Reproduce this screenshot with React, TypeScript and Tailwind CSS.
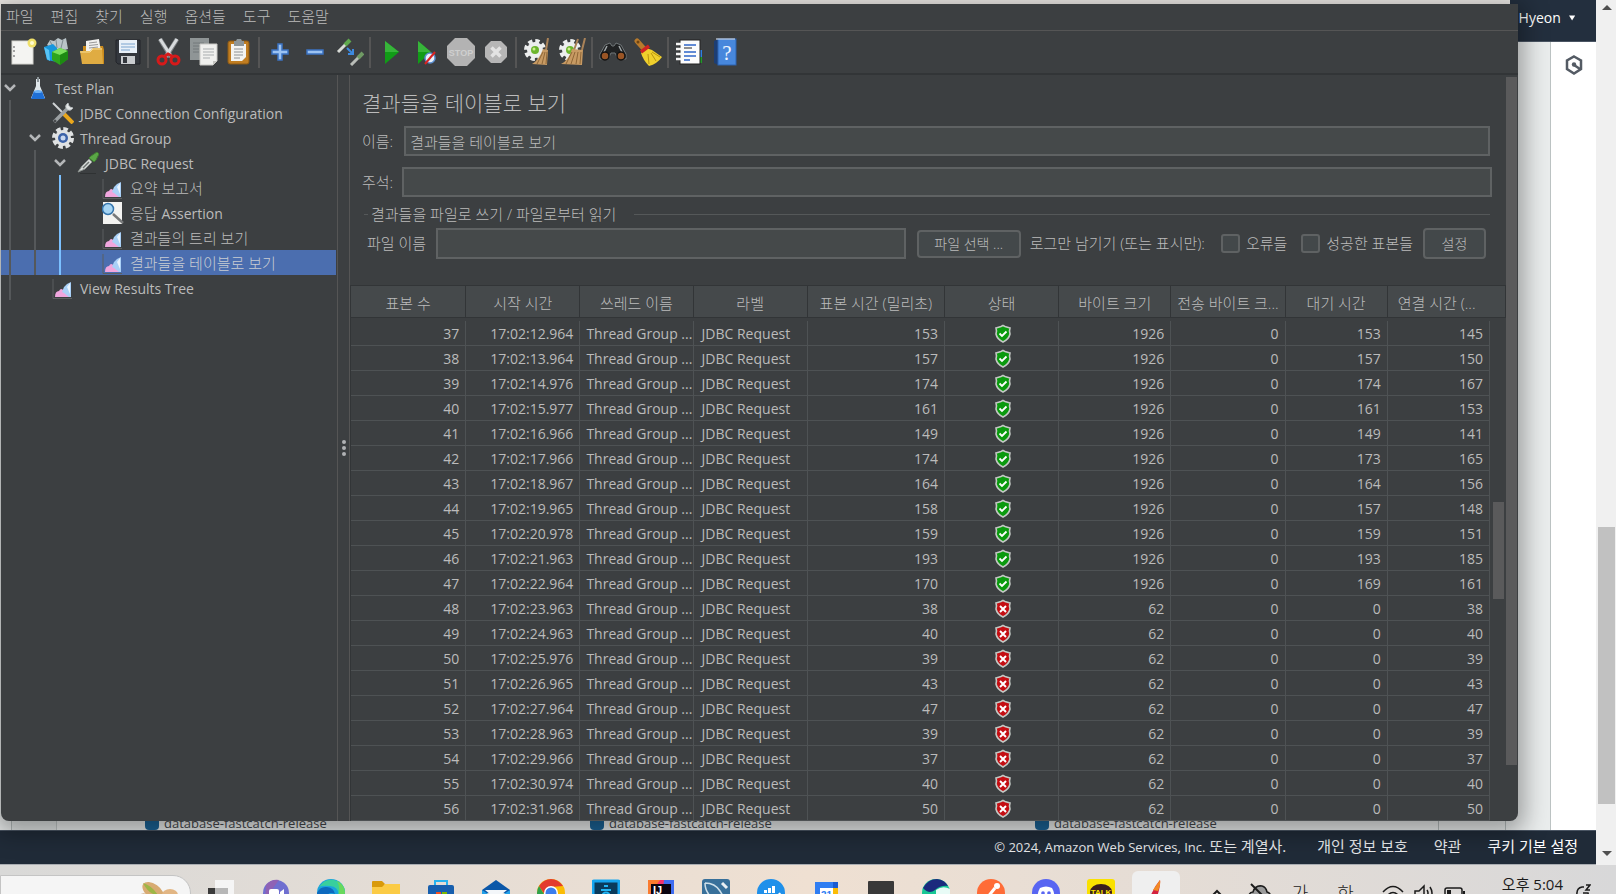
import type { ReactNode } from "react";

type Sample = [number, string, number, boolean, number, number, number];

// 표본 수, 시작 시간, 표본 시간, 성공 여부, 바이트, 대기 시간, 연결 시간
const samples: Sample[] = [
  [37, "17:02:12.964", 153, true, 1926, 153, 145],
  [38, "17:02:13.964", 157, true, 1926, 157, 150],
  [39, "17:02:14.976", 174, true, 1926, 174, 167],
  [40, "17:02:15.977", 161, true, 1926, 161, 153],
  [41, "17:02:16.966", 149, true, 1926, 149, 141],
  [42, "17:02:17.966", 174, true, 1926, 173, 165],
  [43, "17:02:18.967", 164, true, 1926, 164, 156],
  [44, "17:02:19.965", 158, true, 1926, 157, 148],
  [45, "17:02:20.978", 159, true, 1926, 159, 151],
  [46, "17:02:21.963", 193, true, 1926, 193, 185],
  [47, "17:02:22.964", 170, true, 1926, 169, 161],
  [48, "17:02:23.963", 38, false, 62, 0, 38],
  [49, "17:02:24.963", 40, false, 62, 0, 40],
  [50, "17:02:25.976", 39, false, 62, 0, 39],
  [51, "17:02:26.965", 43, false, 62, 0, 43],
  [52, "17:02:27.964", 47, false, 62, 0, 47],
  [53, "17:02:28.963", 39, false, 62, 0, 39],
  [54, "17:02:29.966", 37, false, 62, 0, 37],
  [55, "17:02:30.974", 40, false, 62, 0, 40],
  [56, "17:02:31.968", 50, false, 62, 0, 50],
];

const columns = [
  "표본 수",
  "시작 시간",
  "쓰레드 이름",
  "라벨",
  "표본 시간 (밀리초)",
  "상태",
  "바이트 크기",
  "전송 바이트 크...",
  "대기 시간",
];

const menus = ["파일", "편집", "찾기", "실행", "옵션들", "도구", "도움말"];

/* ---------- Iconos de la barra de herramientas ---------- */

const Svg = ({ children, size = 28, box = 28 }: { children: ReactNode; size?: number; box?: number }) => (
  <svg width={size} height={size} viewBox={`0 0 ${box} ${box}`} fill="none" aria-hidden="true" className="shrink-0">
    {children}
  </svg>
);

const NewIcon = () => (
  <Svg>
    <rect x="3" y="3" width="21" height="23" fill="#f4f4f2" stroke="#d5d5d0" />
    <path d="M5 8v2M5 12v2M5 17v2" stroke="#888" strokeWidth="1.5" />
    <circle cx="23" cy="5" r="4.5" fill="#efe06a" />
    <circle cx="23" cy="5" r="2" fill="#fffbd0" />
  </Svg>
);

const TemplatesIcon = () => (
  <Svg>
    <path d="M3 7l3-5 4 1 4-3 4 2 4-2 2 11-10 3z" fill="#b9c4c8" />
    <path d="M6 3l3 6M12 2l1 8M19 2l-2 8" stroke="#7d8a8f" />
    <path d="M0 9l9-3 4 4v14l-10-2z" fill="#1696dd" />
    <path d="M0 9l5 3 1 11-3-2z" fill="#58c3f5" />
    <path d="M8 14l8-4 8 3v8l-8 6-8-5z" fill="#2ea51c" />
    <path d="M8 14l8-4 8 3-8 4z" fill="#7be05c" />
    <path d="M16 17v10l8-6v-8z" fill="#1d8a12" />
  </Svg>
);

const OpenIcon = () => (
  <Svg>
    <path d="M4 8h20l1 4v14H4z" fill="#c98a1c" />
    <path d="M7 3l13-2 2 13H7z" fill="#f1f1ef" />
    <path d="M10 5l8-1M10 7.500l9-1M10 10l9-1" stroke="#999" />
    <path d="M1 13h10l3-3h9l1 16H3z" fill="#e0ac42" />
    <path d="M1 14h10l3-3h9" stroke="#f8dc91" />
  </Svg>
);

const SaveIcon = () => (
  <Svg>
    <path d="M2 2h24v24H4l-2-2z" fill="#33373d" stroke="#22252a" />
    <rect x="5" y="2" width="18" height="13" fill="#e8f0f8" />
    <path d="M7 6h14M7 9h14M7 12h9" stroke="#7ba4cf" />
    <rect x="7" y="18" width="14" height="8" fill="#c9cccf" />
    <rect x="9" y="19" width="4" height="6" fill="#33373d" />
  </Svg>
);

const CutIcon = () => (
  <Svg>
    <path d="M5 1l11 18M22 1L11 19" stroke="#7e8285" strokeWidth="4.500" />
    <path d="M5 1l11 17M22 1L11 18" stroke="#d9dcde" strokeWidth="3" />
    <ellipse cx="7" cy="22" rx="4" ry="4" stroke="#d61a1a" strokeWidth="3" />
    <ellipse cx="20" cy="22" rx="4" ry="4" stroke="#d61a1a" strokeWidth="3" />
    <path d="M10 18l3-2 4 2" stroke="#d61a1a" strokeWidth="3" />
  </Svg>
);

const CopyIcon = () => (
  <Svg>
    <rect x="0" y="0" width="19" height="22" fill="#8f9596" />
    <path d="M3 5h11M3 8h11M3 11h6M3 14h6" stroke="#73797a" />
    <path d="M10 6h17v17l-4 4H10z" fill="#f0f0ee" stroke="#c8c8c5" />
    <path d="M13 11h11M13 14h11M13 17h11M13 20h7" stroke="#a9adaf" />
    <path d="M27 23h-4v4z" fill="#c4c4c0" />
  </Svg>
);

const PasteIcon = () => (
  <Svg>
    <rect x="3" y="3" width="21" height="23" rx="2" fill="#c07d21" stroke="#8c5a14" />
    <path d="M6 6h15v13l-4 4H6z" fill="#f3f3f0" />
    <path d="M9 11h9M9 14h9M9 17h9M9 20h6" stroke="#8e9294" />
    <path d="M9 3h2l1-2h4l1 2h2v5H9z" fill="#8d9597" />
  </Svg>
);

const PlusIcon = () => (
  <Svg>
    <path d="M12 6h4v6h6v4h-6v6h-4v-6H6v-4h6z" fill="#9cc3f2" stroke="#3b73c2" strokeWidth="1.500" />
  </Svg>
);

const MinusIcon = () => (
  <Svg>
    <rect x="6" y="12" width="16" height="4" fill="#9cc3f2" stroke="#3b73c2" strokeWidth="1.500" />
  </Svg>
);

const ToggleIcon = () => (
  <Svg>
    <path d="M2 14l8-8" stroke="#d8dbd6" strokeWidth="3" />
    <path d="M9 7l5-5" stroke="#5fa84e" strokeWidth="4" />
    <path d="M11 10l5 5M17 11v5h-5" stroke="#3d8ae0" strokeWidth="2" />
    <path d="M15 27l8-8" stroke="#b9bdb8" strokeWidth="3" />
    <path d="M22 20l5-5" stroke="#6f9a64" strokeWidth="4" />
  </Svg>
);

const StartIcon = () => (
  <Svg>
    <path d="M8 3l14 11L8 26z" fill="#119c17" />
    <path d="M8 3l14 11H8z" fill="#37b53a" />
  </Svg>
);

const StartNoPauseIcon = () => (
  <Svg>
    <path d="M6 3l13 11L6 26z" fill="#119c17" />
    <path d="M6 3l13 11H6z" fill="#37b53a" />
    <circle cx="18" cy="20" r="5" fill="#e9f1fb" stroke="#5c8fd0" strokeWidth="1.500" />
    <path d="M13 26L23 14" stroke="#d92323" strokeWidth="2" />
  </Svg>
);

const StopIcon = () => (
  <Svg>
    <path d="M8 0h12l8 8v12l-8 8H8l-8-8V8z" fill="#b3b3b3" />
    <text x="14" y="18" textAnchor="middle" fontSize="9" fontWeight="700" fontFamily="Liberation Sans, sans-serif" fill="#cfcfcf">
      STOP
    </text>
  </Svg>
);

const ShutdownIcon = () => (
  <Svg>
    <path d="M9 3h10l6 6v10l-6 6H9l-6-6V9z" fill="#b6b6b6" />
    <path d="M9.500 9.500l9 9M18.500 9.500l-9 9" stroke="#e3e3e3" strokeWidth="3.500" />
  </Svg>
);

const Gear = () => (
  <>
    <circle cx="12" cy="12" r="8" fill="#eceeee" />
    <circle cx="12" cy="12" r="9" stroke="#eceeee" strokeWidth="4" strokeDasharray="4.200 2.870" />
    <circle cx="12" cy="12" r="4" fill="#6cb52d" />
    <circle cx="11" cy="11" r="1.500" fill="#cdf08f" />
  </>
);

const ClearIcon = () => (
  <Svg>
    <Gear />
    <path d="M25 0l-2 12" stroke="#a98258" strokeWidth="2" />
    <path d="M20 11l5 1-1 15-15-1q7-4 11-15z" fill="#c79a63" />
    <path d="M20 14l-6 12M22 14l-3 12M24 14l-1 12" stroke="#8f6737" />
  </Svg>
);

const ClearAllIcon = () => (
  <Svg>
    <Gear />
    <path d="M20 1l-4 11M27 0l-3 12" stroke="#a98258" strokeWidth="2" />
    <path d="M14 11l11 1-1 15-21-1q8-4 11-15z" fill="#c79a63" />
    <path d="M14 14L8 26M17 14l-4 12M20 14l-2 12M23 14l-1 12" stroke="#8f6737" />
  </Svg>
);

const SearchIcon = () => (
  <Svg>
    <path d="M6 7l5-2 2 3h2l2-3 5 2 5 9v5h-8l-3-6h-4l-3 6H1v-5z" fill="#202223" stroke="#6f7577" />
    <path d="M8 8l-4 8M20 8l4 8" stroke="#a2a8aa" strokeWidth="1.500" />
    <circle cx="6" cy="18" r="4" fill="#9a5525" stroke="#111" strokeWidth="1.500" />
    <circle cx="22" cy="18" r="4" fill="#9a5525" stroke="#111" strokeWidth="1.500" />
  </Svg>
);

const SweepIcon = () => (
  <Svg>
    <path d="M3 3l8 9" stroke="#b87a2c" strokeWidth="5" strokeLinecap="round" />
    <circle cx="4" cy="4" r="1.500" fill="#6f4512" />
    <path d="M12 10l6 2 10 7q-5 7-13 9-6-6-8-13z" fill="#f0d02c" />
    <path d="M14 16l1 10M17 15l5 8M18 14l8 5" stroke="#b9950f" />
    <path d="M7 14l8-6" stroke="#cf2222" strokeWidth="3.500" />
  </Svg>
);

const FunctionIcon = () => (
  <Svg>
    <rect x="22" y="12" width="5" height="7" fill="#2f7fe0" />
    <rect x="22" y="19" width="5" height="6" fill="#219a28" />
    <rect x="5" y="2" width="20" height="24" fill="#fbfbfb" stroke="#222" />
    <path d="M9 7h12M9 14h12M9 18h12M9 22h6" stroke="#2f66c9" strokeWidth="1.500" />
    <path d="M9 10h8" stroke="#222" />
    <path d="M1 6h5M1 11h5M1 16h5M1 21h5" stroke="#f4f4f4" strokeWidth="2.500" />
  </Svg>
);

const HelpIcon = () => (
  <Svg>
    <path d="M4 3l4-2v26l-4-2z" fill="#1d3e73" />
    <rect x="8" y="1" width="18" height="26" fill="#4787dc" stroke="#2d63b0" />
    <path d="M6 1h19" stroke="#e8eef6" />
    <text x="17" y="22" textAnchor="middle" fontSize="21" fontFamily="Liberation Serif, serif" fill="#eef5ff">
      ?
    </text>
  </Svg>
);

const toolGroups: { label: string; icon: ReactNode }[][] = [
  [
    { label: "새로 만들기", icon: <NewIcon /> },
    { label: "템플릿", icon: <TemplatesIcon /> },
    { label: "열기", icon: <OpenIcon /> },
    { label: "저장", icon: <SaveIcon /> },
  ],
  [
    { label: "잘라내기", icon: <CutIcon /> },
    { label: "복사", icon: <CopyIcon /> },
    { label: "붙여넣기", icon: <PasteIcon /> },
  ],
  [
    { label: "모두 펼치기", icon: <PlusIcon /> },
    { label: "모두 접기", icon: <MinusIcon /> },
    { label: "토글", icon: <ToggleIcon /> },
  ],
  [
    { label: "시작", icon: <StartIcon /> },
    { label: "멈춤 없이 시작", icon: <StartNoPauseIcon /> },
    { label: "중지", icon: <StopIcon /> },
    { label: "종료", icon: <ShutdownIcon /> },
  ],
  [
    { label: "지우기", icon: <ClearIcon /> },
    { label: "모두 지우기", icon: <ClearAllIcon /> },
  ],
  [
    { label: "검색", icon: <SearchIcon /> },
    { label: "검색 초기화", icon: <SweepIcon /> },
  ],
  [
    { label: "함수 도우미", icon: <FunctionIcon /> },
    { label: "도움말 보기", icon: <HelpIcon /> },
  ],
];

/* ---------- Árbol del plan de pruebas ---------- */

const FlaskIcon = () => (
  <Svg size={22} box={22}>
    <path d="M9 2h4v7l5 12H4L9 9z" fill="#dfe6ea" />
    <path d="M11 0v5" stroke="#8b9398" strokeWidth="2" />
    <path d="M7 14h8l3 8H4z" fill="#1e6fd6" />
    <ellipse cx="11" cy="14.500" rx="4" ry="1.500" fill="#6bb0f5" />
  </Svg>
);

const ToolsIcon = () => (
  <Svg size={22} box={22}>
    <path d="M1 1l11 11" stroke="#cfd3d4" strokeWidth="2" />
    <path d="M12 12l9 9" stroke="#e9a71c" strokeWidth="4" />
    <path d="M2 20L16 6" stroke="#9ba0a2" strokeWidth="3.500" />
    <path d="M16 1q-4 3-1 6t6-1l-3-1-1-1z" fill="#e3e6e7" stroke="#b5babc" />
    <circle cx="3" cy="19" r="1.500" fill="#4a4d4f" />
  </Svg>
);

const GearIcon = () => (
  <Svg size={22} box={22}>
    <circle cx="11" cy="11" r="9" stroke="#dfe1e2" strokeWidth="4" strokeDasharray="4.500 2.570" />
    <circle cx="11" cy="11" r="8" fill="#dfe1e2" />
    <circle cx="11" cy="11" r="5" fill="#3c62a8" />
    <circle cx="11" cy="11" r="2.500" fill="#c9d8f0" />
  </Svg>
);

const DropperIcon = () => (
  <Svg size={22} box={22}>
    <path d="M1 20l4-6 7-7 3 3-7 7z" fill="#d9ddda" stroke="#8d9390" />
    <path d="M6 16l6-6" stroke="#6d7370" strokeWidth="1.500" />
    <path d="M12 6l2-2 6-4 2 2-3 6-2 2z" fill="#5aa746" stroke="#3f7c30" />
    <path d="M3 21.500h16" stroke="#2f3233" />
  </Svg>
);

const GraphIcon = () => (
  <Svg size={22} box={22}>
    <path d="M1 2v19.500h19" stroke="#5b5f61" />
    <path d="M3 20q0-6 4-6 2-4 5 0 4-1 6 6z" fill="#f0a6de" />
    <path d="M10 15l2-5 3-3 4-2v15h-2l-5-4z" fill="#a9d0f7" />
    <path d="M15 10l3-4v11z" fill="#eaf4fe" />
  </Svg>
);

const AssertionIcon = () => (
  <Svg size={22} box={22}>
    <rect x="1" y="0" width="19" height="22" fill="#f3f3f1" />
    <circle cx="6" cy="7" r="5.500" fill="#a5d4f3" stroke="#3776ad" strokeWidth="1.500" />
    <path d="M11 12l10 9" stroke="#77797a" strokeWidth="2.500" />
  </Svg>
);

type TreeRow = { label: ReactNode; depth: number; icon: ReactNode; open?: boolean; guides: string[]; selected?: boolean };

const gray = "bg-[#55585a]";
const blue = "bg-[#7bc0ff]";

const Latin = ({ children }: { children: string }) => <span className="text-sm font-normal">{children}</span>;

const tree: TreeRow[] = [
  { label: <Latin>Test Plan</Latin>, depth: 0, icon: <FlaskIcon />, open: true, guides: [] },
  { label: <Latin>JDBC Connection Configuration</Latin>, depth: 1, icon: <ToolsIcon />, guides: [gray] },
  { label: <Latin>Thread Group</Latin>, depth: 1, icon: <GearIcon />, open: true, guides: [gray] },
  { label: <Latin>JDBC Request</Latin>, depth: 2, icon: <DropperIcon />, open: true, guides: [gray, gray] },
  { label: "요약 보고서", depth: 3, icon: <GraphIcon />, guides: [gray, gray, blue] },
  { label: <>응답 <Latin>Assertion</Latin></>, depth: 3, icon: <AssertionIcon />, guides: [gray, gray, blue] },
  { label: "결과들의 트리 보기", depth: 3, icon: <GraphIcon />, guides: [gray, gray, blue] },
  { label: "결과들을 테이블로 보기", depth: 3, icon: <GraphIcon />, guides: [gray, gray, blue], selected: true },
  { label: <Latin>View Results Tree</Latin>, depth: 1, icon: <GraphIcon />, guides: [gray] },
];

const TreeItem = ({ row }: { row: TreeRow }) => (
  <li
    role="treeitem"
    aria-selected={!!row.selected}
    className={`flex h-[25px] items-center pl-px ${row.selected ? "bg-[#4b6eaf] text-[#c8ccd2]" : ""}`}
  >
    {Array.from({ length: row.depth + 1 }, (_, i) => (
      <span key={i} className="h-full w-[25px] shrink-0">
        <span className="flex h-full w-4 items-center justify-center">
          {row.guides[i] && <span className={`h-full w-0.5 ${row.guides[i]}`} />}
          {row.open && i === row.depth && (
            <svg width="12" height="8" viewBox="0 0 12 8" fill="none" aria-hidden="true">
              <path d="M1 1l5 5 5-5" stroke="#b4b6b8" strokeWidth="2.500" />
            </svg>
          )}
        </span>
      </span>
    ))}
    {row.icon}
    <span className="ml-1.5 pt-0.5 text-[15px] font-light whitespace-nowrap">{row.label}</span>
  </li>
);

const Shield = ({ ok }: { ok: boolean }) => (
  <svg width="18" height="20" viewBox="0 0 18 20" fill="none" role="img" aria-label={ok ? "성공" : "실패"} className="mx-auto">
    <path
      d="M9 1.500l2 1 5 1.500q-1 3 0 6-1 5-7 8-6-3-7-8 1-3 0-6l5-1.500z"
      fill={ok ? "#0a9a0e" : "#c40d12"}
      stroke="#c3c8c4"
      strokeWidth="1.600"
    />
    {ok ? (
      <path d="M5.500 9.500l2.500 2.500 4.500-4.500" stroke="#fff" strokeWidth="1.800" />
    ) : (
      <path d="M6 7l6 6M12 7l-6 6" stroke="#fff" strokeWidth="2" />
    )}
  </svg>
);

/* ---------- Tabla de resultados ---------- */

const head = "h-[33px] border-y border-r border-[#323537] bg-[#45494b] px-0 pt-[3px] pb-0 text-center text-[15px] leading-5 font-light";
const cell = "h-[25px] overflow-hidden border-b border-r border-[#4e5254] px-1.5 pt-0.5 pb-0 leading-[22px] whitespace-nowrap";

const ResultTable = () => (
  <div className="relative min-h-0 flex-1 overflow-hidden border-l border-[#323537]">
    <table className="w-full table-fixed border-separate border-spacing-0 text-sm font-normal">
      <colgroup>
        <col className="w-[115px]" />
        <col className="w-[114px]" />
        <col className="w-[113px]" />
        <col className="w-[114px]" />
        <col className="w-[137px]" />
        <col className="w-[114px]" />
        <col className="w-[112px]" />
        <col className="w-[114px]" />
        <col className="w-[102px]" />
        <col className="w-[102px]" />
        <col className="w-[16px]" />
      </colgroup>
      <thead>
        <tr>
          {columns.map((name) => (
            <th key={name} scope="col" className={head}>
              {name}
            </th>
          ))}
          <th scope="col" colSpan={2} className={`${head} pl-2.5! text-left!`}>
            연결 시간 (...
          </th>
        </tr>
      </thead>
      <tbody>
        <tr aria-hidden="true">
          <td colSpan={11} className="h-[3px] p-0" />
        </tr>
        {samples.map(([no, start, time, ok, bytes, latency, connect]) => (
          <tr key={no}>
            <td className={`${cell} text-right`}>{no}</td>
            <td className={`${cell} text-right`}>{start}</td>
            <td className={`${cell} pr-0!`}>Thread Group ...</td>
            <td className={`${cell} pl-2!`}>JDBC Request</td>
            <td className={`${cell} text-right`}>{time}</td>
            <td className={`${cell} pr-1!`}>
              <Shield ok={ok} />
            </td>
            <td className={`${cell} text-right`}>{bytes}</td>
            <td className={`${cell} text-right`}>0</td>
            <td className={`${cell} text-right`}>{latency}</td>
            <td className={`${cell} text-right`}>{connect}</td>
            <td className="p-0" />
          </tr>
        ))}
      </tbody>
    </table>
    {/* Scroll de la tabla */}
    <div className="absolute top-[217px] right-0.5 h-[97px] w-[11px] bg-[#5a5a5b]" />
  </div>
);

const field = "min-w-0 flex-1 border-2 border-[#5f6263] bg-[#45494a] px-1 text-[15px] font-light outline-none";
const check = "size-[19px] appearance-none rounded-[3px] border-2 border-[#5f6263] bg-[#43484a]";

const ResultPanel = () => (
  <section className="flex min-w-0 flex-1 flex-col pt-[13px]">
    <h1 className="ml-3 h-[30px] text-[21px] leading-[30px] font-light">결과들을 테이블로 보기</h1>
    <div className="mt-2 mr-4 ml-3 flex h-[30px] items-center gap-[11px]">
      <label htmlFor="name">이름:</label>
      <input id="name" defaultValue="결과들을 테이블로 보기" className={`h-[30px] ${field}`} />
    </div>
    <div className="mt-[11px] mr-3.5 ml-3 flex h-[30px] items-center gap-[9px]">
      <label htmlFor="comment">주석:</label>
      <input id="comment" className={`h-[30px] ${field}`} />
    </div>
    <fieldset className="mt-2 mr-4 ml-3.5 min-w-0 border-t border-[#555859]">
      <legend className="ml-1 h-[18px] pr-[18px] pl-[3px] leading-[18px]">결과들을 파일로 쓰기 / 파일로부터 읽기</legend>
      <div className="mt-[5px] flex h-[31px] items-center pr-1 pl-[3px] whitespace-nowrap">
        <label htmlFor="file">파일 이름</label>
        <input id="file" className={`ml-2.5 h-[31px] ${field}`} />
        <button className="ml-[11px] h-7 w-[104px] rounded border-2 border-[#5f6263] bg-[#43484a] text-sm leading-none font-light">
          파일 선택 ...
        </button>
        <span className="ml-[9px]">로그만 남기기 (또는 표시만):</span>
        <input id="errors" type="checkbox" className={`ml-4 ${check}`} />
        <label htmlFor="errors" className="ml-1.5">오류들</label>
        <input id="successes" type="checkbox" className={`ml-3.5 ${check}`} />
        <label htmlFor="successes" className="ml-1.5">성공한 표본들</label>
        <button className="ml-2.5 h-[31px] w-[63px] rounded border-2 border-[#5f6263] bg-[#43484a] text-sm leading-none font-light">
          설정
        </button>
      </div>
    </fieldset>
    <div className="mt-[26px] flex min-h-0 flex-1">
      <ResultTable />
    </div>
  </section>
);

const JMeterWindow = () => (
  <div className="absolute top-1 right-[98px] bottom-[73px] left-px flex flex-col overflow-hidden rounded-b-lg bg-[#3c3f41] text-[15px] font-light text-[#bbbbbb] shadow-[0_6px_24px_6px_rgba(0,0,0,0.35)]">
    <nav className="flex h-[27px] shrink-0 items-center gap-[17px] border-b border-[#555555] pb-0.5 pl-[5px]">
      {menus.map((menu) => (
        <button key={menu}>{menu}</button>
      ))}
    </nav>
    <div className="flex h-11 shrink-0 items-center border-b-2 border-[#323537] pl-1">
      {toolGroups.map((group, i) => (
        <div key={i} className="flex items-center">
          {i > 0 && <span className="mx-0.5 h-[31px] w-0.5 bg-[#555555]" />}
          {group.map((tool) => (
            <button key={tool.label} aria-label={tool.label} className="flex w-[35px] justify-center">
              {tool.icon}
            </button>
          ))}
        </div>
      ))}
    </div>
    <div className="flex min-h-0 flex-1">
      <ul role="tree" className="w-[335px] shrink-0">
        {tree.map((row, i) => (
          <TreeItem key={i} row={row} />
        ))}
      </ul>
      {/* Separador */}
      <div className="ml-px flex w-[13px] shrink-0 flex-col items-center justify-center gap-0.5 border-x border-[#555555]">
        <span className="size-1 rounded-full bg-[#b0b2b4]" />
        <span className="size-1 rounded-full bg-[#b0b2b4]" />
        <span className="size-1 rounded-full bg-[#b0b2b4]" />
      </div>
      <ResultPanel />
      <div className="w-3 shrink-0 pt-0.5 pr-px">
        <div className="h-[92.500%] bg-[#5a5a5b]" />
      </div>
    </div>
  </div>
);

/* ---------- Consola de AWS detrás de la ventana ---------- */

const DbName = () => (
  <div className="flex h-3.5 w-[445px] shrink-0 items-center gap-[5px]">
    <span className="size-3.5 rounded bg-[#1b6497]" />
    <span className="text-[13px] leading-3.5 text-[#44474b]">database-fastcatch-release</span>
  </div>
);

const Console = () => (
  <div className="flex h-[calc(100vh-29px)] shrink-0">
    <div className="flex min-w-0 flex-1 flex-col">
      <header className="flex h-[42px] shrink-0 justify-end bg-[#f1eeea]">
        <button className="flex h-full w-[86px] items-center justify-end gap-2 border-b border-[#4a5563] bg-[#232f3e] pr-[21px] pb-1.5 text-sm text-white">
          uHyeon
          <svg width="10" height="8" viewBox="0 0 10 8" aria-hidden="true">
            <path d="M0 0h10L5 8z" fill="#fff" />
          </svg>
        </button>
      </header>
      <div className="flex min-h-0 flex-1">
        <div className="flex min-w-0 flex-1 items-end overflow-hidden border-r border-[#bcc3c3] bg-[#eaeded]">
          <div className="h-full w-[12px] border-r border-[#b5bcbc]" />
          <div className="h-full w-[45px] border-r border-[#c3c9c9] bg-[#e2e6e6]" />
          <div className="flex h-3.5 min-w-0 flex-1 pl-[88px]">
            <DbName />
            <DbName />
            <DbName />
          </div>
          <div className="h-full w-[68px] border-x border-[#b5bcbc]" />
          <div className="h-full w-[44px]" />
        </div>
        <aside className="flex w-[45px] shrink-0 justify-center bg-white pt-[13px]">
          <svg width="18" height="20" viewBox="0 0 18 20" fill="none" aria-hidden="true">
            <path d="M9 1.500l7 4v8.500l-7 4.500-7-4.500V5.500z" stroke="#545b64" strokeWidth="2.500" />
            <circle cx="9" cy="9.500" r="2.200" fill="#545b64" />
            <path d="M9 10l6 4" stroke="#545b64" strokeWidth="2.500" />
          </svg>
        </aside>
      </div>
      <footer className="flex h-[35px] shrink-0 items-center justify-end border-y border-t-[#4a5563] border-b-[#a9adb2] bg-[#202b38] pr-[18px] pb-0.5 text-[15px] text-[#e8eaec]">
        <span>
          <span className="text-[13px] font-medium">© 2024, Amazon Web Services, Inc.</span> 또는 계열사.
        </span>
        <a href="#privacy" className="ml-[31px]">개인 정보 보호</a>
        <a href="#terms" className="ml-[26px]">약관</a>
        <a href="#cookies" className="ml-[26px] text-white">쿠키 기본 설정</a>
      </footer>
    </div>
    {/* Barra de scroll del navegador */}
    <div className="flex w-5 shrink-0 flex-col items-center justify-between bg-[#f0f0f0] py-[5px] pl-px">
      <svg width="10" height="5" viewBox="0 0 10 5" aria-hidden="true">
        <path d="M0 5h10L5 0z" fill="#505050" />
      </svg>
      <div className="flex w-full flex-1 flex-col justify-end pb-[47px]">
        <div className="mx-px h-[277px] bg-[#c1c1c1]" />
      </div>
      <svg width="10" height="5" viewBox="0 0 10 5" aria-hidden="true" className="mb-1">
        <path d="M0 0h10L5 5z" fill="#505050" />
      </svg>
    </div>
  </div>
);

/* ---------- Barra de tareas ---------- */

const apps: { name: string; icon: ReactNode }[] = [
  {
    name: "작업 보기",
    icon: (
      <>
        <rect x="1" y="9" width="20" height="17" fill="#3a3a3a" />
        <rect x="8" y="1" width="19" height="17" fill="#f5f5f5" />
        <rect x="8" y="9" width="13" height="9" fill="#b7b7b7" />
      </>
    ),
  },
  {
    name: "Teams",
    icon: (
      <>
        <circle cx="14" cy="14" r="13" fill="#6f6fd0" />
        <path d="M4 6q5-6 13-5L3 20z" fill="#8f62b5" />
        <rect x="7" y="10" width="10" height="9" rx="2" fill="#fff" />
        <path d="M18 13l4-3v9l-4-3z" fill="#fff" />
      </>
    ),
  },
  {
    name: "Edge",
    icon: (
      <>
        <circle cx="14" cy="14" r="14" fill="#1ba3dd" />
        <path d="M2 8Q8-1 17 1q11 2 11 13-2 5-7 4 2-10-8-11Q6 6 2 8z" fill="#38cf9d" />
        <path d="M20 2q8 4 8 12-2 4-7 4 3-9-1-16z" fill="#69d95c" />
        <path d="M0 14Q3 7 10 8t8 7q-6-3-8 2t4 10Q1 27 0 14z" fill="#0d69be" />
      </>
    ),
  },
  {
    name: "탐색기",
    icon: (
      <>
        <path d="M0 3q0-1 1-1h9l3 3-3 5H0z" fill="#d99a0a" />
        <path d="M0 8h10l3-3h15v20H0z" fill="#fbcb45" />
      </>
    ),
  },
  {
    name: "Store",
    icon: (
      <>
        <path d="M8 6V2h12v4" stroke="#27b3ef" strokeWidth="2" />
        <rect x="1" y="6" width="26" height="21" rx="2" fill="#175fae" />
        <path d="M9 13h5v5H9z" fill="#f25022" />
        <path d="M15 13h5v5h-5z" fill="#7fba00" />
        <path d="M9 19h5v5H9z" fill="#00a4ef" />
        <path d="M15 19h5v5h-5z" fill="#ffb900" />
      </>
    ),
  },
  {
    name: "메일",
    icon: (
      <>
        <path d="M0 11L14 1l14 10v3H0z" fill="#0b57a8" />
        <path d="M3 11h22l-11 9z" fill="#f3f6f9" />
        <path d="M0 11l14 9 14-9v16H0z" fill="#22a0e8" />
      </>
    ),
  },
  {
    name: "Chrome",
    icon: (
      <>
        <circle cx="14" cy="14" r="14" fill="#fbbc05" />
        <path d="M2 7Q7 0 14 0t12 7L14 8q-6 0-6 8z" fill="#e33b2e" />
        <path d="M2 7l8 13-1 7Q0 23 0 14q0-4 2-7z" fill="#2fa24c" />
        <circle cx="14" cy="14" r="7" fill="#fff" />
        <circle cx="14" cy="14" r="5.500" fill="#3b7ded" />
      </>
    ),
  },
  {
    name: "한글 사전",
    icon: (
      <>
        <rect x="1" y="2" width="26" height="26" rx="1" fill="#0a3b5c" stroke="#16a5ef" strokeWidth="3" />
        <path d="M12 7h4M9 11h10" stroke="#21b5f5" strokeWidth="2" />
        <circle cx="14" cy="17" r="3.500" stroke="#21b5f5" strokeWidth="2" />
      </>
    ),
  },
  {
    name: "IntelliJ",
    icon: (
      <>
        <rect x="1" y="1" width="26" height="27" fill="#f5316d" />
        <path d="M1 1h12L1 18z" fill="#fa7b2f" />
        <path d="M17 1h10v27H14z" fill="#3f6cf0" />
        <rect x="4" y="5" width="20" height="22" fill="#0b0410" />
        <text x="6" y="15" fontSize="11" fontWeight="700" fontFamily="Liberation Sans, sans-serif" fill="#fff">
          IJ
        </text>
      </>
    ),
  },
  {
    name: "MySQL Workbench",
    icon: (
      <>
        <rect width="28" height="28" rx="3" fill="#38709a" />
        <path d="M3 4q10 0 15 8t8 15M3 4q0 8 6 14l2 9" stroke="#cfe0ea" strokeWidth="1.500" />
        <path d="M20 4l5 5" stroke="#e9eff3" strokeWidth="3" />
      </>
    ),
  },
  {
    name: "Docker",
    icon: (
      <>
        <circle cx="14" cy="14" r="14" fill="#1f90ea" />
        <path d="M5 15h16q2-3 3 0-1 9-10 9T5 15z" fill="#fff" />
        <path d="M7 11h3v3H7zM11 9h3v5h-3zM15 7h3v7h-3z" fill="#fff" />
      </>
    ),
  },
  {
    name: "캘린더",
    icon: (
      <>
        <path d="M3 3h22v24H3z" fill="#fff" />
        <path d="M3 3h18v6H3z" fill="#2f7df2" />
        <path d="M3 3h5v24H3z" fill="#2f7df2" />
        <path d="M21 3h5v6h-5z" fill="#1a5bd0" />
        <path d="M21 9h5v18h-5z" fill="#fbbc05" />
        <text x="9" y="20" fontSize="10" fontWeight="700" fontFamily="Liberation Sans, sans-serif" fill="#2f7df2">
          31
        </text>
      </>
    ),
  },
  { name: "터미널", icon: <rect x="1" y="2" width="26" height="25" rx="1" fill="#393939" /> },
  {
    name: "DataGrip",
    icon: (
      <>
        <circle cx="14" cy="14" r="14" fill="#17c795" />
        <path d="M1 9Q6 0 15 0q8 1 11 7-7-1-13 4T1 9z" fill="#1b2a7d" />
        <path d="M14 11q7-5 14-1v14H14z" fill="#e8fbf6" />
      </>
    ),
  },
  {
    name: "Postman",
    icon: (
      <>
        <circle cx="14" cy="14" r="14" fill="#ff6c37" />
        <path d="M10 19l8-10" stroke="#fff" strokeWidth="3" />
        <circle cx="20" cy="7" r="3" fill="#fff" />
      </>
    ),
  },
  {
    name: "Discord",
    icon: (
      <>
        <circle cx="14" cy="14" r="14" fill="#5865f2" />
        <path d="M8 9q6-3 12 0 3 5 2 10H6q-1-5 2-10z" fill="#fff" />
        <circle cx="11" cy="14" r="1.800" fill="#5865f2" />
        <circle cx="17" cy="14" r="1.800" fill="#5865f2" />
      </>
    ),
  },
  {
    name: "카카오톡",
    icon: (
      <>
        <rect width="28" height="28" rx="3" fill="#fae100" />
        <ellipse cx="14" cy="13" rx="11" ry="8" fill="#3b1e1e" />
        <text x="14" y="16" textAnchor="middle" fontSize="8" fontWeight="700" fontFamily="Liberation Sans, sans-serif" fill="#fae100">
          TALK
        </text>
      </>
    ),
  },
];

const Taskbar = () => (
  <div className="flex h-14 shrink-0 items-center bg-linear-to-r from-[#d9d9d8] via-[#efe0d2] to-[#d8d8d9] text-[#1b1b1b]">
    <button aria-label="검색" className="mr-0.5 h-9 w-[191px] rounded-r-full border border-[#c4c4c4] bg-[#f5f5f5]">
      <svg width="44" height="28" viewBox="0 0 44 28" aria-hidden="true" className="mt-1 ml-[134px]">
        <path d="M0 18q4-7 12-5l6 12H2z" fill="#c28c54" />
        <ellipse cx="18" cy="10" rx="12" ry="7" transform="rotate(35 18 10)" fill="#d8ab72" />
        <path d="M8 2q8 2 15 12-9 0-15-12z" fill="#9db646" />
        <ellipse cx="35" cy="14" rx="8" ry="6" fill="#e2b684" />
        <path d="M16 20q10-8 24 0v8H16z" fill="#c08a55" />
      </svg>
    </button>
    {apps.map((app) => (
      <button key={app.name} aria-label={app.name} className="flex w-[55px] justify-center">
        <Svg>{app.icon}</Svg>
      </button>
    ))}
    <button aria-label="JMeter" className="mr-auto ml-1 flex h-11 w-12 justify-center rounded-md bg-[#efefef] pt-2">
      <Svg>
        <path d="M5 27Q10 10 18 1q1 7-6 26z" fill="#d3213f" />
        <path d="M11 11l7-10q1 4-2 11z" fill="#f28a24" />
      </Svg>
    </button>
    <div className="mr-[25px] flex items-center text-[18px] font-light">
      <svg width="14" height="10" viewBox="0 0 14 10" fill="none" aria-hidden="true">
        <path d="M1 9l6-6 6 6" stroke="#1b1b1b" strokeWidth="2" />
      </svg>
      <svg width="24" height="22" viewBox="0 0 24 22" fill="none" aria-hidden="true" className="ml-6">
        <path d="M5 19q-5-1-4-6 1-3 4-3 2-7 9-6 4 1 5 6 4 1 3 5-1 4-5 4z" fill="#9b9b9b" stroke="#1b1b1b" strokeWidth="1.500" />
        <path d="M3 2l18 18" stroke="#1b1b1b" strokeWidth="2" />
      </svg>
      <span className="ml-5">가</span>
      <span className="ml-[29px]">한</span>
      <svg width="22" height="20" viewBox="0 0 22 20" fill="none" aria-hidden="true" className="ml-7">
        <path d="M1 9q10-11 20 0M5 13q6-7 12 0M9 17q2-2 4 0" stroke="#1b1b1b" strokeWidth="1.500" />
      </svg>
      <svg width="20" height="20" viewBox="0 0 20 20" fill="none" aria-hidden="true" className="ml-2.5">
        <path d="M1 8h4l5-5v14l-5-5H1zM13 7q2 3 0 6M16 4q4 6 0 12" stroke="#1b1b1b" strokeWidth="1.500" />
      </svg>
      <svg width="22" height="14" viewBox="0 0 22 14" fill="none" aria-hidden="true" className="ml-2.5">
        <rect x="1" y="2" width="17" height="10" rx="2" stroke="#1b1b1b" strokeWidth="1.500" />
        <path d="M3 4h4v6H3zM19 5h2v4h-2z" fill="#1b1b1b" />
      </svg>
      <div className="ml-9 h-[34px] text-[15px] leading-4 font-normal">오후 5:04</div>
      <svg width="16" height="18" viewBox="0 0 16 18" fill="none" aria-hidden="true" className="ml-3">
        <path d="M9 3H7Q2 4 2 9l-1 5h13l-1-5H8" stroke="#1b1b1b" strokeWidth="1.500" />
        <path d="M11 1h4l-4 5h4" stroke="#1b1b1b" strokeWidth="1.500" />
      </svg>
    </div>
  </div>
);

export default function App() {
  return (
    <div className="relative flex h-screen flex-col overflow-hidden bg-[#dcdcdc] font-['Open_Sans','Noto_Sans_CJK_KR',sans-serif]">
      <Console />
      <Taskbar />
      <JMeterWindow />
    </div>
  );
}
